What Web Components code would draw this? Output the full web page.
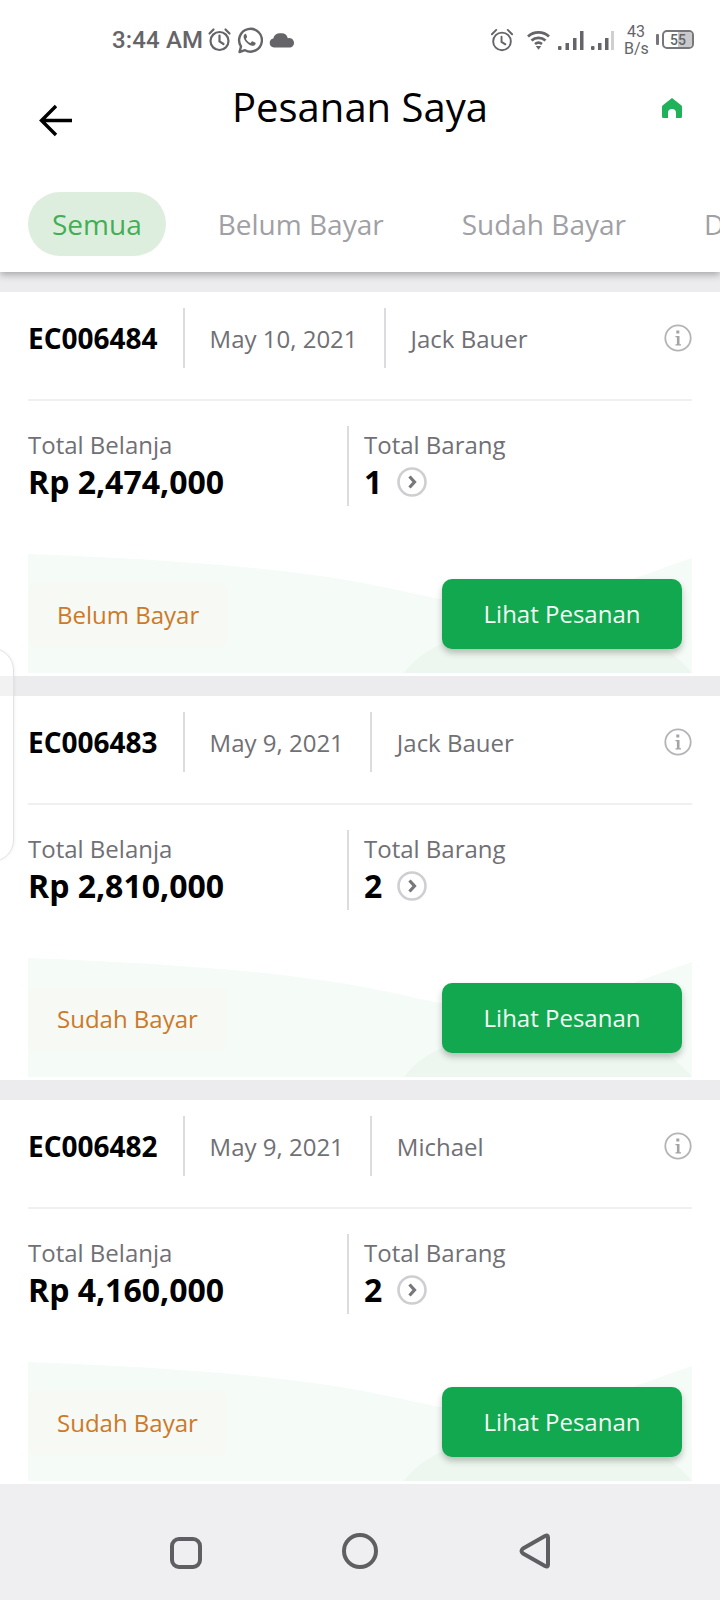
<!DOCTYPE html>
<html>
<head>
<meta charset="utf-8">
<style>
html, body { margin: 0; padding: 0; }
body { width: 720px; height: 1600px; overflow: hidden; background: #ececee; font-family: "Open Sans", "Noto Sans", sans-serif; }
</style>
</head>
<body>
<order-screen>
    <status-bar slot="top"></status-bar>
    <app-header slot="top" title="Pesanan Saya"></app-header>
    <order-tabs slot="top">
        <tab-pill active>Semua</tab-pill>
        <tab-pill>Belum Bayar</tab-pill>
        <tab-pill>Sudah Bayar</tab-pill>
        <tab-pill>Dikirim</tab-pill>
    </order-tabs>
    <order-card code="EC006484" date="May 10, 2021" name="Jack Bauer" total="Rp 2,474,000" qty="1" status="Belum Bayar"></order-card>
    <order-card code="EC006483" date="May 9, 2021" name="Jack Bauer" total="Rp 2,810,000" qty="2" status="Sudah Bayar"></order-card>
    <order-card code="EC006482" date="May 9, 2021" name="Michael" total="Rp 4,160,000" qty="2" status="Sudah Bayar"></order-card>
    <nav-bar slot="bottom"></nav-bar>
</order-screen>

<script>
class OrderScreen extends HTMLElement {
    constructor() {
        super();
        this.shadowDOM = this.attachShadow({ mode: "open" });
        this.shadowDOM.innerHTML = `
        <style>
        :host { display: flex; flex-direction: column; position: relative; width: 720px; height: 1600px; overflow: hidden; background: #ececee; }
        .top { position: relative; z-index: 2; background: #fff; box-shadow: 0 3px 7px rgba(60, 60, 60, .38); }
        .list { flex: 1; min-height: 0; overflow: hidden; display: flex; flex-direction: column; gap: 20px; padding-top: 20px; }
        .edge {
            position: absolute; left: -30px; top: 648px; width: 42px; height: 212px; z-index: 3;
            border: 1px solid #e2e1e5; border-radius: 26px; background: rgba(255, 255, 255, .3);
            box-shadow: 1px 0 3px rgba(0, 0, 0, .05);
        }
        </style>
        <div class="top"><slot name="top"></slot></div>
        <div class="list"><slot></slot></div>
        <slot name="bottom"></slot>
        <div class="edge"></div>
        `;
    }
}

class StatusBar extends HTMLElement {
    constructor() {
        super();
        this.shadowDOM = this.attachShadow({ mode: "open" });
        this.shadowDOM.innerHTML = `
        <style>
        :host { display: flex; align-items: center; height: 76px; padding: 3px 0 0 112px; box-sizing: border-box; color: #656569; font-family: Roboto, "Liberation Sans", sans-serif; }
        .time { font-size: 24px; font-weight: 500; letter-spacing: .15px; margin-right: -1px; }
        .left { display: flex; align-items: center; gap: 5px; }
        .wa { margin-left: -2px; }
        .right { display: flex; align-items: center; margin-left: auto; margin-right: 26px; }
        svg { display: block; }
        .speed { font-size: 16px; line-height: 17px; text-align: center; margin: 0 8px 0 10px; width: 24px; padding-top: 1px; }
        .pct { position: absolute; inset: 0; display: flex; align-items: center; justify-content: center; font-size: 14px; font-weight: 500; }
        .batt { position: relative; width: 28px; height: 15px; border: 2px solid #77777b; border-radius: 5px; overflow: hidden; margin-left: 3px; }
        .batt i { position: absolute; top: 0; bottom: 0; right: 0; width: 14px; background: #c9c9cc; }
        .nub { width: 3px; height: 11px; background: #77777b; border-radius: 1px; }
        </style>
        <div class="left">
            <span class="time">3:44 AM</span>
            <svg width="25" height="25" viewBox="0 0 25 25" fill="none" stroke="#656569" stroke-width="2.2" stroke-linecap="round"><circle cx="12.5" cy="14" r="9"/><path d="M12.5 8.5V14.5L16.5 17M2.5 6.5L6.500 2.500M22.500 6.500L18.500 2.500"/></svg>
            <svg class="wa" width="28" height="28" viewBox="0 0 28 28" fill="none" stroke="#656569" stroke-width="2.4" stroke-linejoin="round"><path d="M4.500 26L6 20.500A11.400 11.400 0 1 1 10 24.200Z"/><path fill="#656569" stroke="none" d="M10.400 7.800c-.9.300-1.900 1.600-1.800 3.100.2 3.300 4.900 8.500 8.800 8.900 1.700.1 3-1 3.200-2.100.1-.6-.1-.9-.5-1.100l-2.400-1.200c-.5-.2-.8-.1-1.100.3l-.8 1c-.3.3-.5.3-.9.100-1.700-.8-3-2-3.800-3.600-.2-.4-.1-.6.1-.9l.7-.9c.2-.3.2-.6.1-.9l-1-2.400c-.2-.4-.5-.4-.6-.3z"/></svg>
            <svg width="28" height="16" viewBox="0 0 26 16" fill="#656569"><path d="M5 15.500A4.500 4.500 0 0 1 4.300 6.600 6.500 6.500 0 0 1 12 1.300 6.500 6.500 0 0 1 18.800 6.200 4.700 4.700 0 0 1 21.500 15.500Z"/></svg>
        </div>
        <div class="right">
            <svg width="24" height="24" viewBox="0 0 25 25" fill="none" stroke="#656569" stroke-width="2" stroke-linecap="round" style="margin-right:13px"><circle cx="12.500" cy="14" r="9.200"/><path d="M12 9V14.500L16 17M2 6.500L6.500 2M23 6.500L18.500 2"/></svg>
            <svg width="23" height="20" viewBox="0 0 23 20" fill="none" stroke="#656569" stroke-width="2.800" style="margin-right:8px"><path d="M1 6.500C7 1 16 1 22 6.500M4.500 10.500C8.500 7 14.500 7 18.500 10.500M8 14C10 12.500 13 12.500 15 14"/><path fill="#656569" stroke="none" d="M8.800 16h5.400L11.500 19.800Z"/></svg>
            <svg width="56" height="20" viewBox="0 0 56 20" fill="#656569"><rect x="0" y="16" width="3.500" height="4" rx="1"/><rect x="7.500" y="13" width="3.500" height="7"/><rect x="15" y="8" width="3.500" height="12"/><rect x="22" y="1" width="3.500" height="19"/><rect x="33" y="16" width="3.500" height="4" rx="1"/><rect x="40" y="13" width="3.500" height="7"/><rect x="47" y="8" width="3.500" height="12"/><rect x="53" y="1" width="3" height="19" fill="#cfcfd2"/></svg>
            <div class="speed">43<br>B/s</div>
            <div class="nub"></div>
            <div class="batt"><i></i><span class="pct">55</span></div>
        </div>
        `;
    }
}

class AppHeader extends HTMLElement {
    constructor() {
        super();
        this.shadowDOM = this.attachShadow({ mode: "open" });
    }

    connectedCallback() {
        this.shadowDOM.innerHTML = `
        <style>
        :host { display: grid; grid-template-columns: 120px 1fr 120px; height: 116px; box-sizing: border-box; }
        .back { padding: 27px 0 0 38px; }
        h1 { margin: 0; padding-top: 6px; text-align: center; font: 400 40px/50px "Open Sans", sans-serif; color: #000; }
        .home { display: flex; justify-content: flex-end; padding: 21px 37px 0 0; align-items: flex-start; }
        svg { display: block; }
        </style>
        <div class="back"><svg width="34" height="34" viewBox="0 0 34 34" fill="none" stroke="#000" stroke-width="3.400"><path d="M34 17.500H4M18 3L3.500 17.500L18 32"/></svg></div>
        <h1>${this.getAttribute("title")}</h1>
        <div class="home"><svg width="22" height="22" viewBox="0 0 22 22" fill="#1fb25a"><path d="M11 1L20.500 8.500Q21 9 21 10V19.500Q21 21 19.500 21H15V16A4 4 0 0 0 7 16V21H2.500Q1 21 1 19.500V10Q1 9 1.500 8.500Z"/></svg></div>
        `;
    }
}

class OrderTabs extends HTMLElement {
    constructor() {
        super();
        this.shadowDOM = this.attachShadow({ mode: "open" });
        this.shadowDOM.innerHTML = `
        <style>
        :host { display: flex; align-items: flex-start; gap: 78px; height: 80px; padding-left: 28px; overflow: hidden; white-space: nowrap; }
        </style>
        <slot></slot>
        `;
    }
}

class TabPill extends HTMLElement {
    constructor() {
        super();
        this.shadowDOM = this.attachShadow({ mode: "open" });
        this.shadowDOM.innerHTML = `
        <style>
        :host { display: block; flex: none; height: 64px; line-height: 64px; font-size: 28px; color: #a0a0a5; }
        :host([active]) { background: #deeede; color: #43ae55; border-radius: 32px; padding: 0 24px; margin-right: -26px; }
        </style>
        <slot></slot>
        `;
    }
}

class OrderCard extends HTMLElement {
    constructor() {
        super();
        this.shadowDOM = this.attachShadow({ mode: "open" });
    }

    connectedCallback() {
        this.render();
    }

    render() {
        this.shadowDOM.innerHTML = `
        <style>
        :host { display: block; flex: none; height: 384px; padding: 16px 28px 0; box-sizing: border-box; background: #fff; color: #000; }
        .head { display: flex; align-items: center; height: 60px; margin-bottom: 31px; position: relative; }
        .code { font-size: 28px; font-weight: 700; padding-right: 25px; }
        .cell { align-self: stretch; display: flex; align-items: center; border-left: 2px solid #dcdce0; padding: 0 26px 0 25px; font-size: 24px; color: #707075; }
        .head svg { margin-left: auto; }
        .sum { display: grid; grid-template-columns: 319px 1fr; border-top: 2px solid #f0f0f2; padding-top: 25px; height: 155px; box-sizing: border-box; }
        .sum > div { height: 80px; }
        .sum > div + div { border-left: 2px solid #dcdce0; padding-left: 15px; }
        .label { font-size: 24px; line-height: 30px; color: #707075; padding-top: 4px; }
        .value { display: flex; align-items: center; gap: 15px; font-size: 32px; line-height: 44px; font-weight: 700; }
        .foot { position: relative; height: 119px; display: flex; align-items: flex-start; justify-content: space-between; }
        .foot svg { position: absolute; left: 0; top: 0; }
        .status { position: relative; margin-top: 29px; height: 64px; line-height: 64px; padding: 0 29px; font-size: 24px; color: #cc7a28; background: rgba(253, 240, 225, .1); border-radius: 8px; }
        .btn { position: relative; margin: 25px 10px 0 0; width: 240px; height: 70px; line-height: 70px; text-align: center; border-radius: 10px; background: #12a84f; color: #f2fbf5; font-size: 24px; box-shadow: 0 4px 6px rgba(60, 70, 60, .32); }
        </style>
        <div class="head">
            <span class="code">${this.getAttribute("code")}</span>
            <span class="cell">${this.getAttribute("date")}</span>
            <span class="cell">${this.getAttribute("name")}</span>
            <svg width="28" height="28" viewBox="0 0 28 28"><circle cx="14" cy="14" r="12.700" fill="none" stroke="#b4b4b8" stroke-width="1.800"/><path fill="#a4a4a8" d="M12.300 6.500h3v3h-3zM11.500 12h4v8.200h1.500v1.300h-5.500v-1.300h1.400v-6.900h-1.400z"/></svg>
        </div>
        <div class="sum">
            <div>
                <div class="label">Total Belanja</div>
                <div class="value">${this.getAttribute("total")}</div>
            </div>
            <div>
                <div class="label">Total Barang</div>
                <div class="value">${this.getAttribute("qty")}
                    <svg width="30" height="30" viewBox="0 0 30 30" fill="none"><circle cx="15" cy="15" r="13.500" stroke="#cfcfd3" stroke-width="2.600"/><path d="M12.500 9.500L17.500 15L12.500 20.500" stroke="#77777b" stroke-width="3.200"/></svg>
                </div>
            </div>
        </div>
        <div class="foot">
            <svg width="664" height="119" viewBox="0 0 664 119">
                <path fill="#f5fbf7" d="M0 0C150 6 270 14 370 36C430 50 470 56 520 48C580 38 620 18 664 4V119H0Z"/>
                <path fill="#edf7f0" d="M376 119C388 102 410 88 440 82H620C640 95 655 108 664 119Z"/>
            </svg>
            <span class="status">${this.getAttribute("status")}</span>
            <span class="btn">Lihat Pesanan</span>
        </div>
        `;
    }
}

class NavBar extends HTMLElement {
    constructor() {
        super();
        this.shadowDOM = this.attachShadow({ mode: "open" });
        this.shadowDOM.innerHTML = `
        <style>
        :host { display: flex; flex: none; position: relative; z-index: 2; height: 116px; background: #efeef0; padding: 49px 0 0 170px; box-sizing: border-box; align-items: flex-start; }
        svg { display: block; }
        </style>
        <svg width="32" height="36" viewBox="0 0 32 36" fill="none" stroke="#5f5f63" stroke-width="4" style="margin-top:2px"><rect x="2" y="4" width="28" height="28" rx="7"/></svg>
        <svg width="36" height="36" viewBox="0 0 36 36" fill="none" stroke="#5f5f63" stroke-width="4" style="margin-left:140px"><circle cx="18" cy="18" r="16"/></svg>
        <svg width="32" height="36" viewBox="0 0 32 36" fill="none" stroke="#5f5f63" stroke-width="4" stroke-linejoin="round" style="margin-left:141px"><path d="M29 4.500V31.500Q29 34.500 26 33L4 20.500Q1 18 4 15.500L26 3Q29 1.500 29 4.500Z"/></svg>
        `;
    }
}

customElements.define("order-screen", OrderScreen);
customElements.define("status-bar", StatusBar);
customElements.define("app-header", AppHeader);
customElements.define("order-tabs", OrderTabs);
customElements.define("tab-pill", TabPill);
customElements.define("order-card", OrderCard);
customElements.define("nav-bar", NavBar);
</script>
</body>
</html>
